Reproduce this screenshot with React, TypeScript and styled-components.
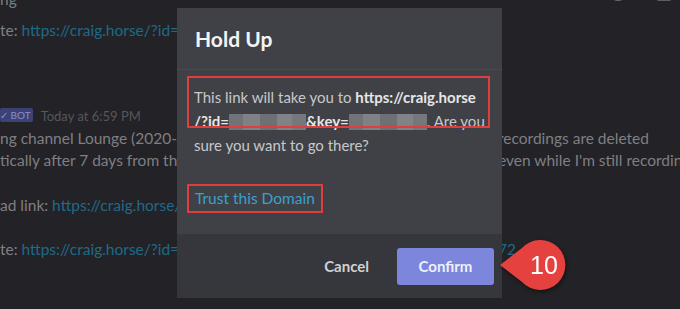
import styled, { createGlobalStyle } from 'styled-components';

const GlobalStyle = createGlobalStyle`
  html, body {
    margin: 0;
    padding: 0;
    background: #232226;
    overflow: hidden;
  }
  * {
    box-sizing: border-box;
  }
`;

const Page = styled.div`
  position: relative;
  width: 680px;
  height: 309px;
  overflow: hidden;
  background: #232226;
  font-family: Lato, 'Noto Sans', sans-serif;
`;

const Chat = styled.div`
  display: flex;
  flex-direction: column;
  margin-top: -12px;
  color: #7f7f84;
  font-size: 15.5px;
`;

const Row = styled.div<{ $gap?: number }>`
  display: grid;
  grid-template-columns: 498px 1fr;
  height: 22px;
  line-height: 22px;
  margin-top: ${(p) => p.$gap ?? 0}px;
  white-space: nowrap;
`;

const Cell = styled.div`
  overflow: hidden;
`;

const Link = styled.span`
  color: #1f6a88;
`;

const BotTag = styled.span`
  display: inline-block;
  height: 14px;
  line-height: 14px;
  padding: 0 2px 0 0;
  margin-right: 8px;
  background: #3c4278;
  color: #8890c8;
  font-size: 10px;
  border-radius: 2px;
  vertical-align: 2px;
`;

const Stamp = styled.span`
  color: #56565b;
  font-size: 13px;
`;

const Modal = styled.div`
  position: absolute;
  left: 177px;
  top: 8px;
  width: 325px;
  height: 290px;
  display: flex;
  flex-direction: column;
  background: #404146;
`;

const Header = styled.div`
  height: 62px;
  padding: 0 18px;
  display: flex;
  align-items: center;
  border-bottom: 1px solid #494a50;
`;

const Title = styled.h2`
  margin: 0;
  color: #f4f4f5;
  font-size: 21px;
  font-weight: 700;
`;

const Body = styled.div`
  position: relative;
  flex: 1;
  padding: 15px 12px 0 17px;
`;

const Text = styled.p`
  margin: 0;
  color: #c7c8cb;
  font-size: 15px;
  line-height: 24px;
  white-space: nowrap;
`;

const Strong = styled.span`
  color: #e6e6e8;
  font-weight: 700;
`;

const Blur = styled.span<{ $w: number }>`
  display: inline-block;
  width: ${(p) => p.$w}px;
  height: 16px;
  vertical-align: -3px;
  background: linear-gradient(90deg, #7a7c81 0 18%, #8a8c90 18% 40%, #76787d 40% 62%, #8c8e92 62% 82%, #7f8185 82%);
  opacity: 0.85;
`;

const Mark = styled.div`
  position: absolute;
  left: 10px;
  top: 6px;
  width: 303px;
  height: 52px;
  border: 2px solid #de3e3e;
  pointer-events: none;
`;

const Trust = styled.span`
  display: inline-block;
  margin: 27px 0 0 -7px;
  padding: 0 6px;
  height: 29px;
  line-height: 25px;
  border: 2px solid #de3e3e;
  color: #3aa0cc;
  font-size: 15.5px;
`;

const Footer = styled.div`
  height: 64px;
  display: flex;
  align-items: center;
  justify-content: flex-end;
  gap: 28px;
  padding-right: 8px;
  background: #36373c;
`;

const Cancel = styled.button`
  background: none;
  border: 0;
  padding: 0;
  color: #cfd0d3;
  font-family: inherit;
  font-size: 15px;
  font-weight: 700;
`;

const Confirm = styled.button`
  width: 97px;
  height: 37px;
  border: 0;
  border-radius: 3px;
  background: #7c86dc;
  color: #eef0fb;
  font-family: inherit;
  font-size: 15px;
  font-weight: 700;
`;

const Callout = styled.div`
  position: absolute;
  left: 496px;
  top: 236px;
  width: 72px;
  height: 58px;
  filter: drop-shadow(1px 2px 2px rgba(0, 0, 0, 0.45));
`;

const CalloutNum = styled.span`
  position: absolute;
  left: 28px;
  top: 0;
  width: 40px;
  height: 58px;
  line-height: 58px;
  text-align: center;
  color: #ffffff;
  font-family: 'Liberation Sans', Arial, sans-serif;
  font-size: 25px;
`;

const TopIcons = styled.div`
  position: absolute;
  right: 8px;
  top: -7px;
  display: flex;
  gap: 30px;
`;

function App() {
  return (
    <>
      <GlobalStyle />
      <Page>
        <Chat>
          <Row>
            <Cell>ng</Cell>
            <Cell />
          </Row>
          <Row $gap={9}>
            <Cell>
              te: <Link>https://craig.horse/?id=</Link>
            </Cell>
            <Cell />
          </Row>
          <Row $gap={63}>
            <Cell>
              <BotTag>✓ BOT</BotTag>
              <Stamp>Today at 6:59 PM</Stamp>
            </Cell>
            <Cell />
          </Row>
          <Row $gap={1}>
            <Cell>ng channel Lounge (2020-10-21). Note that</Cell>
            <Cell>recordings are deleted</Cell>
          </Row>
          <Row>
            <Cell>tically after 7 days from the start of the recording, even</Cell>
            <Cell>even while I'm still recording</Cell>
          </Row>
          <Row $gap={23}>
            <Cell>
              ad link: <Link>https://craig.horse/</Link>
            </Cell>
            <Cell />
          </Row>
          <Row $gap={22}>
            <Cell>
              te: <Link>https://craig.horse/?id=</Link>
            </Cell>
            <Cell>
              <Link>72</Link>
            </Cell>
          </Row>
        </Chat>

        <TopIcons>
          <svg width="16" height="10" viewBox="0 0 16 10">
            <ellipse cx="8" cy="3" rx="7" ry="5" fill="#6c6c71" />
          </svg>
          <svg width="16" height="10" viewBox="0 0 16 10">
            <rect x="0" y="0" width="16" height="8" rx="3" fill="#5e5e63" />
          </svg>
        </TopIcons>

        <Modal>
          <Header>
            <Title>Hold Up</Title>
          </Header>
          <Body>
            <Text>
              This link will take you to <Strong>https://craig.horse</Strong>
              <br />
              <Strong>/?id=</Strong>
              <Blur $w={77} />
              <Strong>&amp;key=</Strong>
              <Blur $w={78} />. Are you
              <br />
              sure you want to go there?
            </Text>
            <Mark />
            <Trust>Trust this Domain</Trust>
          </Body>
          <Footer>
            <Cancel>Cancel</Cancel>
            <Confirm>Confirm</Confirm>
          </Footer>
        </Modal>

        <Callout>
          <svg width="72" height="58" viewBox="0 0 72 58">
            <path d="M4 29 L26 12 A25 25 0 1 1 26 46 Z" fill="#e5423f" />
          </svg>
          <CalloutNum>10</CalloutNum>
        </Callout>
      </Page>
    </>
  );
}

export default App;
